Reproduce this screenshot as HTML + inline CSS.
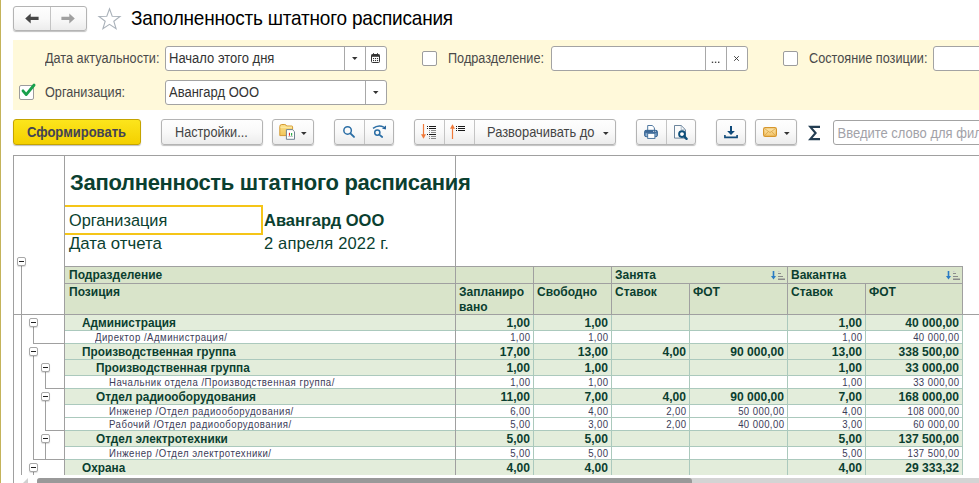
<!DOCTYPE html>
<html><head><meta charset="utf-8">
<style>
*{box-sizing:border-box}
html,body{margin:0;padding:0}
body{width:979px;height:483px;overflow:hidden;background:#fff;position:relative;font-family:"Liberation Sans",sans-serif;color:#333}
.a{position:absolute}
svg.a{overflow:visible}
.t{position:absolute;white-space:nowrap;line-height:1}
.btn{position:absolute;border:1px solid #b4b4b4;border-radius:3px;background:linear-gradient(#fefefe 0%,#f9f9f9 50%,#ececec 100%);box-shadow:0 1px 1px rgba(0,0,0,.25)}
.vd{position:absolute;top:0;bottom:0;width:1px;background:#c4c4c4}
.inp{position:absolute;border:1px solid #a3a3a3;border-radius:3px;background:#fff}
.inp .vd{background:#a8a8a8}
.cb{position:absolute;width:15px;height:15px;border:1px solid #9c9c9c;border-radius:2px;background:#fff}
.lbl{position:absolute;white-space:nowrap;line-height:1;font-size:12.7px;color:#4a4a4a;transform:scaleY(1.08);transform-origin:0 85%}
.sy{transform:scaleY(1.08);transform-origin:0 85%}
.hl{position:absolute;height:1px}
.vl{position:absolute;width:1px}
.tb{position:absolute;width:9px;height:9px;border:1px solid #a8a8a8;border-radius:2px;background:#fff;box-shadow:0 1px 1px rgba(0,0,0,.15)}
.tb::after{content:"";position:absolute;left:1px;top:3px;width:5px;height:1.3px;background:#222}
.rt{position:absolute;white-space:nowrap;line-height:1;color:#0b3f30}
</style></head><body>
<!-- left olive line -->
<div class="a" style="left:0;top:0;width:1px;height:483px;background:#c4b35a"></div>

<!-- nav buttons -->
<div class="btn" style="left:13px;top:6px;width:74px;height:25px">
  <div class="vd" style="left:36px"></div>
</div>
<svg class="a" style="left:25px;top:13px" width="14" height="11" viewBox="0 0 14 11"><path d="M0.2 5.4 L5.7 0.4 V3.7 H13.6 V7.1 H5.7 V10.4 Z" fill="#474747"/></svg>
<svg class="a" style="left:61px;top:13px" width="14" height="11" viewBox="0 0 14 11"><path d="M13.8 5.4 L8.3 0.4 V3.7 H0.4 V7.1 H8.3 V10.4 Z" fill="#a0a0a0"/></svg>
<!-- star -->
<svg class="a" style="left:97px;top:6.5px" width="25" height="24" viewBox="0 0 25 24"><path d="M12.5 1.8 L15.2 9.2 L23 9.4 L16.8 14.2 L19.1 21.8 L12.5 17.4 L5.9 21.8 L8.2 14.2 L2 9.4 L9.8 9.2 Z" fill="none" stroke="#aab2ba" stroke-width="1.1"/></svg>
<div class="t" style="left:131px;top:9px;font-size:19px;letter-spacing:-0.2px;color:#000;transform:scaleY(1.07);transform-origin:0 85%">Заполненность штатного расписания</div>

<!-- yellow panel -->
<div class="a" style="left:13px;top:40px;width:966px;height:70px;background:#fff9da"></div>
<div class="lbl" style="left:45px;top:53px">Дата актуальности:</div>
<div class="inp" style="left:165px;top:46px;width:222px;height:25px">
  <div class="t sy" style="left:3px;top:5px;font-size:13px;color:#333">Начало этого дня</div>
  <div class="vd" style="left:178px"></div>
  <div class="vd" style="left:199px"></div>
</div>
<svg class="a" style="left:352px;top:57px" width="6" height="4"><path d="M0 0 H5.5 L2.75 3 Z" fill="#333"/></svg>
<svg class="a" style="left:371px;top:53px" width="9" height="10" viewBox="0 0 9 10"><rect x="0.5" y="1.5" width="8" height="8" rx="1" fill="#fff" stroke="#333" stroke-width="1"/><rect x="0.5" y="1.5" width="8" height="2.3" fill="#333"/><rect x="2" y="0.2" width="1" height="1.6" fill="#333"/><rect x="6" y="0.2" width="1" height="1.6" fill="#333"/><g fill="#333"><rect x="2" y="5" width="1.1" height="1.1"/><rect x="4" y="5" width="1.1" height="1.1"/><rect x="6" y="5" width="1.1" height="1.1"/><rect x="2" y="7" width="1.1" height="1.1"/><rect x="4" y="7" width="1.1" height="1.1"/><rect x="6" y="7" width="1.1" height="1.1"/></g></svg>

<div class="lbl" style="left:45px;top:87px">Организация:</div>
<div class="inp" style="left:165px;top:80px;width:222px;height:25px">
  <div class="t sy" style="left:3px;top:5px;font-size:13px;color:#333">Авангард ООО</div>
  <div class="vd" style="left:199px"></div>
</div>
<svg class="a" style="left:373px;top:91px" width="6" height="4"><path d="M0 0 H5.5 L2.75 3 Z" fill="#333"/></svg>
<div class="cb" style="left:19px;top:85px"></div>
<svg class="a" style="left:21px;top:83px" width="15" height="14" viewBox="0 0 15 14"><path d="M2 7.8 L5.2 11.6 L13.1 2" fill="none" stroke="#19a04c" stroke-width="2.8" stroke-linecap="round" stroke-linejoin="round"/></svg>

<div class="cb" style="left:422px;top:51px"></div>
<div class="lbl" style="left:448px;top:53px">Подразделение:</div>
<div class="inp" style="left:551px;top:46px;width:197px;height:25px">
  <div class="vd" style="left:153px"></div>
  <div class="vd" style="left:174px"></div>
</div>
<svg class="a" style="left:711px;top:61px" width="9" height="3"><rect x="0.8" y="0.6" width="1.4" height="1.4" fill="#444"/><rect x="3.9" y="0.6" width="1.4" height="1.4" fill="#444"/><rect x="7" y="0.6" width="1.4" height="1.4" fill="#444"/></svg>
<svg class="a" style="left:733px;top:55px" width="7" height="7" viewBox="0 0 7 7"><path d="M1.2 1.2 L5.8 5.8 M5.8 1.2 L1.2 5.8" stroke="#3a3a3a" stroke-width="0.95"/></svg>
<div class="cb" style="left:783px;top:51px"></div>
<div class="lbl" style="left:809px;top:53px">Состояние позиции:</div>
<div class="inp" style="left:933px;top:46px;width:60px;height:25px"></div>

<!-- toolbar -->
<div class="btn" style="left:13px;top:119px;width:128px;height:26px;background:linear-gradient(#fce51c,#f4d000);border-color:#c5a400"></div>
<div class="t sy" style="left:27px;top:126.4px;font-size:13px;font-weight:bold;color:#434354">Сформировать</div>
<div class="btn" style="left:161px;top:119px;width:102px;height:26px"></div>
<div class="t sy" style="left:175px;top:127px;font-size:12.7px;color:#444">Настройки...</div>

<div class="btn" style="left:272px;top:119px;width:42px;height:26px"></div>
<svg class="a" style="left:278px;top:123px" width="20" height="18" viewBox="0 0 20 18">
  <defs><linearGradient id="fg" x1="0" y1="0" x2="0" y2="1"><stop offset="0" stop-color="#fbe08a"/><stop offset="1" stop-color="#f1c65a"/></linearGradient></defs>
  <path d="M1.8 3.6 Q1.8 1.5 3.6 1.5 H6.8 Q8 1.5 8.6 3 H13.8 Q14.6 3 14.6 3.8 V12.6 H1.8 Z" fill="url(#fg)" stroke="#d49a34" stroke-width="1"/>
  <path d="M2.3 4.2 H14" stroke="#fff2b8" stroke-width="0.8"/>
  <path d="M8.4 6.6 H14.4 L16.5 8.7 V16.3 H8.4 Z" fill="#fff" stroke="#6f8291" stroke-width="1"/>
  <rect x="10.9" y="9.8" width="1.1" height="2.9" fill="#e02a2a"/><rect x="13" y="10" width="1.2" height="2.7" fill="#2fae4a"/>
  <rect x="10.2" y="13" width="4.8" height="0.6" fill="#9aa3aa"/>
</svg>
<svg class="a" style="left:301px;top:132px" width="6" height="4"><path d="M0 0 H5.6 L2.8 3 Z" fill="#333"/></svg>

<div class="btn" style="left:334px;top:119px;width:60px;height:26px"><div class="vd" style="left:29px"></div></div>
<svg class="a" style="left:341px;top:124px" width="16" height="16" viewBox="0 0 16 16"><circle cx="6.6" cy="6.4" r="3.75" fill="none" stroke="#2b6ea5" stroke-width="1.5"/><path d="M9.4 9.3 L13 12.9" stroke="#2b6ea5" stroke-width="1.9" stroke-linecap="round"/></svg>
<svg class="a" style="left:371px;top:124px" width="18" height="16" viewBox="0 0 18 16"><path d="M2 4.3 Q7.5 0.2 12.8 3.2" fill="none" stroke="#2b6ea5" stroke-width="1.5"/><path d="M15 1.6 L14.9 5.4 L11 4.4 Z" fill="#1f5f98"/><circle cx="6.3" cy="8.6" r="2.6" fill="none" stroke="#2b6ea5" stroke-width="1.5"/><path d="M8.3 10.6 L11.2 13" stroke="#2b6ea5" stroke-width="1.7" stroke-linecap="round"/></svg>

<div class="btn" style="left:414px;top:119px;width:202px;height:26px"><div class="vd" style="left:29px"></div><div class="vd" style="left:59px"></div></div>
<svg class="a" style="left:420px;top:123px" width="18" height="17" viewBox="0 0 18 17">
  <path d="M3.5 1 V13" stroke="#f07a3a" stroke-width="1.2"/><path d="M1 11.2 H6 L3.5 15.8 Z" fill="#f07a3a"/>
  <g fill="#1a1a1a"><rect x="7" y="3" width="1" height="1"/><rect x="9" y="3" width="7" height="1"/><rect x="7" y="5" width="1" height="1"/><rect x="9" y="5" width="7" height="1"/><rect x="7" y="11" width="1" height="1"/><rect x="9" y="11" width="7" height="1"/></g>
  <g fill="#8a8a8a"><rect x="9" y="7" width="1" height="1"/><rect x="11" y="7" width="5" height="1"/><rect x="9" y="9" width="1" height="1"/><rect x="11" y="9" width="5" height="1"/><rect x="9" y="13" width="1" height="1"/><rect x="11" y="13" width="5" height="1"/><rect x="9" y="15" width="1" height="1"/><rect x="11" y="15" width="5" height="1"/></g>
</svg>
<svg class="a" style="left:449px;top:123px" width="18" height="17" viewBox="0 0 18 17">
  <path d="M3.5 16 V4" stroke="#f07a3a" stroke-width="1.2"/><path d="M1 5.8 H6 L3.5 1.2 Z" fill="#f07a3a"/>
  <g fill="#1a1a1a"><rect x="7" y="3" width="1" height="1"/><rect x="9" y="3" width="7" height="1"/><rect x="7" y="5" width="1" height="1"/><rect x="9" y="5" width="7" height="1"/><rect x="7" y="7" width="1" height="1"/><rect x="9" y="7" width="7" height="1"/></g>
</svg>
<div class="t sy" style="left:487px;top:127px;font-size:12.9px;color:#444">Разворачивать до</div>
<svg class="a" style="left:603px;top:132px" width="6" height="4"><path d="M0 0 H5.6 L2.8 3 Z" fill="#333"/></svg>

<div class="btn" style="left:636px;top:119px;width:60px;height:26px"><div class="vd" style="left:29px"></div></div>
<svg class="a" style="left:640px;top:120px" width="52" height="24" viewBox="0 0 52 24">
  <path d="M7.7 5.5 H12.2 L14.4 7.7 V11 H7.7 Z" fill="#fff" stroke="#3d6a96" stroke-width="0.9"/>
  <rect x="4.6" y="10.3" width="12.8" height="6.4" rx="1.4" fill="#4d7aa8" stroke="#2f5f8e" stroke-width="0.9"/>
  <rect x="5.6" y="13.2" width="10.8" height="3" fill="#92b2d2"/>
  <rect x="5.6" y="11.5" width="10.8" height="0.8" fill="#2f5580"/>
  <rect x="13" y="10.9" width="1" height="0.8" fill="#e8f0f8"/><rect x="14.8" y="10.9" width="1" height="0.8" fill="#e8f0f8"/>
  <rect x="7.7" y="13.3" width="7.2" height="5.1" fill="#fff" stroke="#3d6a96" stroke-width="0.9"/>
  <path d="M34.5 5.5 H41.2 L45.5 9.8 V18.1 H34.5 Z" fill="#fbfbfb" stroke="#5b7791" stroke-width="0.9"/>
  <path d="M41.2 5.5 V9.8 H45.5" fill="none" stroke="#8aa0b4" stroke-width="0.7"/>
  <circle cx="42" cy="14.1" r="2.9" fill="#fff" stroke="#0e4f7a" stroke-width="1.9"/>
  <path d="M44.2 16.4 L46.6 18.8" stroke="#0e4f7a" stroke-width="2.4" stroke-linecap="round"/>
</svg>

<div class="btn" style="left:716px;top:119px;width:30px;height:26px"></div>
<svg class="a" style="left:723px;top:125px" width="16" height="14" viewBox="0 0 16 14">
  <path d="M8 1 V7" stroke="#0f4a7a" stroke-width="2"/><path d="M4.1 6.1 H11.9 L8 10.1 Z" fill="#0f4a7a"/>
  <path d="M1.9 10 V12.4 H14.1 V10" fill="none" stroke="#0f4a7a" stroke-width="1.6"/>
</svg>
<div class="btn" style="left:755px;top:119px;width:42px;height:26px"></div>
<svg class="a" style="left:763px;top:127px" width="14" height="10" viewBox="0 0 14 10">
  <defs><linearGradient id="eg" x1="0" y1="0" x2="0" y2="1"><stop offset="0" stop-color="#fce6ac"/><stop offset="1" stop-color="#f2c266"/></linearGradient></defs>
  <rect x="0.6" y="0.6" width="12.8" height="8.8" rx="1.6" fill="url(#eg)" stroke="#d6962c" stroke-width="1.2"/>
  <path d="M1.5 1.5 L7 5.6 L12.5 1.5 M1.5 8.8 L5.3 4.6 M12.5 8.8 L8.7 4.6" fill="none" stroke="#d9a447" stroke-width="0.8"/>
</svg>
<svg class="a" style="left:784px;top:132px" width="6" height="4"><path d="M0 0 H5.6 L2.8 3 Z" fill="#333"/></svg>
<svg class="a" style="left:809px;top:126px" width="11" height="14" viewBox="0 0 11 14"><path d="M11 0.9 H1.3 L6.6 7 L1.3 13.1 H11" fill="none" stroke="#233d52" stroke-width="2.1" stroke-linejoin="miter" stroke-miterlimit="10"/></svg>
<div class="inp" style="left:833px;top:120px;width:160px;height:25px">
  <div class="t sy" style="left:3.5px;top:5.5px;font-size:13px;color:#a2a2a8">Введите слово для фильтра</div>
</div>

<!-- report area -->
<div class="hl" style="left:13px;top:155px;width:966px;background:#a0a0a0"></div>
<div class="vl" style="left:13px;top:155px;height:328px;background:#a0a0a0"></div>
<div class="vl" style="left:64px;top:155px;height:320px;background:#a0a0a0"></div>
<div class="vl" style="left:455px;top:155px;height:112px;background:#a0a0a0"></div>

<div class="rt" style="left:70px;top:171.8px;font-size:22px;letter-spacing:-0.3px;font-weight:bold">Заполненность штатного расписания</div>
<div class="a" style="left:65px;top:205px;width:198px;height:30px;border:2px solid #f5c518;border-left:none"></div>
<div class="rt" style="left:69px;top:212.3px;font-size:16.3px">Организация</div>
<div class="rt" style="left:264px;top:212.3px;font-size:16.5px;font-weight:bold">Авангард ООО</div>
<div class="rt" style="left:69px;top:236px;font-size:16.8px">Дата отчета</div>
<div class="rt" style="left:264px;top:235.2px;font-size:16.5px;letter-spacing:0.15px">2 апреля 2022 г.</div>
<div class="a" style="left:65px;top:267px;width:897px;height:47px;background:#d9e4ca"></div>
<div class="hl" style="left:64px;top:266px;width:899px;background:#a0a0a0"></div>
<div class="hl" style="left:64px;top:283px;width:899px;background:#a0a0a0"></div>
<div class="hl" style="left:13px;top:314px;width:966px;background:#a0a0a0"></div>
<div class="vl" style="left:455px;top:266px;height:48px;background:#a0a0a0"></div>
<div class="vl" style="left:533px;top:266px;height:48px;background:#a0a0a0"></div>
<div class="vl" style="left:611px;top:266px;height:48px;background:#a0a0a0"></div>
<div class="vl" style="left:787px;top:266px;height:48px;background:#a0a0a0"></div>
<div class="vl" style="left:962px;top:266px;height:48px;background:#a0a0a0"></div>
<div class="vl" style="left:689px;top:283px;height:31px;background:#a0a0a0"></div>
<div class="vl" style="left:865px;top:283px;height:31px;background:#a0a0a0"></div>
<div class="rt" style="left:69px;top:268.54px;font-size:12px;font-weight:bold;">Подразделение</div>
<div class="rt" style="left:69px;top:286.04px;font-size:12px;font-weight:bold;">Позиция</div>
<div class="rt" style="left:615px;top:268.54px;font-size:12px;font-weight:bold;">Занята</div>
<div class="rt" style="left:791px;top:268.54px;font-size:12px;font-weight:bold;">Вакантна</div>
<div class="rt" style="left:459px;top:286.24px;font-size:12px;font-weight:bold;">Запланиро</div>
<div class="rt" style="left:459px;top:300.64px;font-size:12px;font-weight:bold;">вано</div>
<div class="rt" style="left:537px;top:286.24px;font-size:12px;font-weight:bold;">Свободно</div>
<div class="rt" style="left:615px;top:286.24px;font-size:12px;font-weight:bold;">Ставок</div>
<div class="rt" style="left:693px;top:286.24px;font-size:12px;font-weight:bold;">ФОТ</div>
<div class="rt" style="left:791px;top:286.24px;font-size:12px;font-weight:bold;">Ставок</div>
<div class="rt" style="left:869px;top:286.24px;font-size:12px;font-weight:bold;">ФОТ</div>
<svg class="a" style="left:771px;top:270px" width="15" height="11" viewBox="0 0 15 11"><path d="M2.5 1 V7" stroke="#2a7bc4" stroke-width="1.6"/><path d="M0 6 L5 6 L2.5 9.5 Z" fill="#2a7bc4"/><rect x="7" y="1" width="1.5" height="1" fill="#c8c8c8"/><rect x="7" y="3" width="3" height="1" fill="#8a8a8a"/><rect x="7" y="6" width="5" height="1" fill="#8a8a8a"/><rect x="7" y="8.5" width="7" height="1.5" fill="#8a8a8a"/></svg>
<svg class="a" style="left:946px;top:270px" width="15" height="11" viewBox="0 0 15 11"><path d="M2.5 1 V7" stroke="#2a7bc4" stroke-width="1.6"/><path d="M0 6 L5 6 L2.5 9.5 Z" fill="#2a7bc4"/><rect x="7" y="1" width="1.5" height="1" fill="#c8c8c8"/><rect x="7" y="3" width="3" height="1" fill="#8a8a8a"/><rect x="7" y="6" width="5" height="1" fill="#8a8a8a"/><rect x="7" y="8.5" width="7" height="1.5" fill="#8a8a8a"/></svg>
<div class="a" style="left:65px;top:315px;width:897px;height:15px;background:#e3eddb"></div>
<div class="rt" style="left:82px;top:316.71px;font-size:11.8px;font-weight:bold;transform:scaleY(1.11);transform-origin:0 13%;">Администрация</div>
<div class="rt" style="right:449px;top:316.86px;font-size:12.1px;font-weight:bold;">1,00</div>
<div class="rt" style="right:371px;top:316.86px;font-size:12.1px;font-weight:bold;">1,00</div>
<div class="rt" style="right:117px;top:316.86px;font-size:12.1px;font-weight:bold;">1,00</div>
<div class="rt" style="right:20px;top:316.86px;font-size:12.1px;font-weight:bold;">40 000,00</div>
<div class="hl" style="left:65px;top:330px;width:897px;background:#abc9bd"></div>
<div class="rt" style="left:95px;top:333.27px;font-size:9.6px;color:#3c3c58;letter-spacing:0.5px;transform:scaleY(1.1);transform-origin:0 85%;">Директор /Администрация/</div>
<div class="rt" style="right:448.6px;top:333.27px;font-size:9.6px;color:#3c3c58;letter-spacing:0.4px;transform:scaleY(1.1);transform-origin:0 85%;">1,00</div>
<div class="rt" style="right:370.6px;top:333.27px;font-size:9.6px;color:#3c3c58;letter-spacing:0.4px;transform:scaleY(1.1);transform-origin:0 85%;">1,00</div>
<div class="rt" style="right:116.60000000000002px;top:333.27px;font-size:9.6px;color:#3c3c58;letter-spacing:0.4px;transform:scaleY(1.1);transform-origin:0 85%;">1,00</div>
<div class="rt" style="right:19.600000000000023px;top:333.27px;font-size:9.6px;color:#3c3c58;letter-spacing:0.4px;transform:scaleY(1.1);transform-origin:0 85%;">40 000,00</div>
<div class="a" style="left:65px;top:344px;width:897px;height:15px;background:#e3eddb"></div>
<div class="hl" style="left:65px;top:343px;width:897px;background:#abc9bd"></div>
<div class="rt" style="left:82px;top:345.71px;font-size:11.8px;font-weight:bold;transform:scaleY(1.11);transform-origin:0 13%;">Производственная группа</div>
<div class="rt" style="right:449px;top:345.86px;font-size:12.1px;font-weight:bold;">17,00</div>
<div class="rt" style="right:371px;top:345.86px;font-size:12.1px;font-weight:bold;">13,00</div>
<div class="rt" style="right:293px;top:345.86px;font-size:12.1px;font-weight:bold;">4,00</div>
<div class="rt" style="right:195px;top:345.86px;font-size:12.1px;font-weight:bold;">90 000,00</div>
<div class="rt" style="right:117px;top:345.86px;font-size:12.1px;font-weight:bold;">13,00</div>
<div class="rt" style="right:20px;top:345.86px;font-size:12.1px;font-weight:bold;">338 500,00</div>
<div class="a" style="left:65px;top:360px;width:897px;height:15px;background:#e3eddb"></div>
<div class="hl" style="left:65px;top:359px;width:897px;background:#abc9bd"></div>
<div class="rt" style="left:96px;top:361.71px;font-size:11.8px;font-weight:bold;transform:scaleY(1.11);transform-origin:0 13%;">Производственная группа</div>
<div class="rt" style="right:449px;top:361.86px;font-size:12.1px;font-weight:bold;">1,00</div>
<div class="rt" style="right:371px;top:361.86px;font-size:12.1px;font-weight:bold;">1,00</div>
<div class="rt" style="right:117px;top:361.86px;font-size:12.1px;font-weight:bold;">1,00</div>
<div class="rt" style="right:20px;top:361.86px;font-size:12.1px;font-weight:bold;">33 000,00</div>
<div class="hl" style="left:65px;top:375px;width:897px;background:#abc9bd"></div>
<div class="rt" style="left:109px;top:378.27px;font-size:9.6px;color:#3c3c58;letter-spacing:0.5px;transform:scaleY(1.1);transform-origin:0 85%;">Начальник отдела /Производственная группа/</div>
<div class="rt" style="right:448.6px;top:378.27px;font-size:9.6px;color:#3c3c58;letter-spacing:0.4px;transform:scaleY(1.1);transform-origin:0 85%;">1,00</div>
<div class="rt" style="right:370.6px;top:378.27px;font-size:9.6px;color:#3c3c58;letter-spacing:0.4px;transform:scaleY(1.1);transform-origin:0 85%;">1,00</div>
<div class="rt" style="right:116.60000000000002px;top:378.27px;font-size:9.6px;color:#3c3c58;letter-spacing:0.4px;transform:scaleY(1.1);transform-origin:0 85%;">1,00</div>
<div class="rt" style="right:19.600000000000023px;top:378.27px;font-size:9.6px;color:#3c3c58;letter-spacing:0.4px;transform:scaleY(1.1);transform-origin:0 85%;">33 000,00</div>
<div class="a" style="left:65px;top:389px;width:897px;height:15px;background:#e3eddb"></div>
<div class="hl" style="left:65px;top:388px;width:897px;background:#abc9bd"></div>
<div class="rt" style="left:96px;top:390.71px;font-size:11.8px;font-weight:bold;transform:scaleY(1.11);transform-origin:0 13%;">Отдел радиооборудования</div>
<div class="rt" style="right:449px;top:390.86px;font-size:12.1px;font-weight:bold;">11,00</div>
<div class="rt" style="right:371px;top:390.86px;font-size:12.1px;font-weight:bold;">7,00</div>
<div class="rt" style="right:293px;top:390.86px;font-size:12.1px;font-weight:bold;">4,00</div>
<div class="rt" style="right:195px;top:390.86px;font-size:12.1px;font-weight:bold;">90 000,00</div>
<div class="rt" style="right:117px;top:390.86px;font-size:12.1px;font-weight:bold;">7,00</div>
<div class="rt" style="right:20px;top:390.86px;font-size:12.1px;font-weight:bold;">168 000,00</div>
<div class="hl" style="left:65px;top:404px;width:897px;background:#abc9bd"></div>
<div class="rt" style="left:109px;top:407.27px;font-size:9.6px;color:#3c3c58;letter-spacing:0.5px;transform:scaleY(1.1);transform-origin:0 85%;">Инженер /Отдел радиооборудования/</div>
<div class="rt" style="right:448.6px;top:407.27px;font-size:9.6px;color:#3c3c58;letter-spacing:0.4px;transform:scaleY(1.1);transform-origin:0 85%;">6,00</div>
<div class="rt" style="right:370.6px;top:407.27px;font-size:9.6px;color:#3c3c58;letter-spacing:0.4px;transform:scaleY(1.1);transform-origin:0 85%;">4,00</div>
<div class="rt" style="right:292.6px;top:407.27px;font-size:9.6px;color:#3c3c58;letter-spacing:0.4px;transform:scaleY(1.1);transform-origin:0 85%;">2,00</div>
<div class="rt" style="right:194.60000000000002px;top:407.27px;font-size:9.6px;color:#3c3c58;letter-spacing:0.4px;transform:scaleY(1.1);transform-origin:0 85%;">50 000,00</div>
<div class="rt" style="right:116.60000000000002px;top:407.27px;font-size:9.6px;color:#3c3c58;letter-spacing:0.4px;transform:scaleY(1.1);transform-origin:0 85%;">4,00</div>
<div class="rt" style="right:19.600000000000023px;top:407.27px;font-size:9.6px;color:#3c3c58;letter-spacing:0.4px;transform:scaleY(1.1);transform-origin:0 85%;">108 000,00</div>
<div class="hl" style="left:65px;top:417px;width:897px;background:#abc9bd"></div>
<div class="rt" style="left:109px;top:420.27px;font-size:9.6px;color:#3c3c58;letter-spacing:0.5px;transform:scaleY(1.1);transform-origin:0 85%;">Рабочий /Отдел радиооборудования/</div>
<div class="rt" style="right:448.6px;top:420.27px;font-size:9.6px;color:#3c3c58;letter-spacing:0.4px;transform:scaleY(1.1);transform-origin:0 85%;">5,00</div>
<div class="rt" style="right:370.6px;top:420.27px;font-size:9.6px;color:#3c3c58;letter-spacing:0.4px;transform:scaleY(1.1);transform-origin:0 85%;">3,00</div>
<div class="rt" style="right:292.6px;top:420.27px;font-size:9.6px;color:#3c3c58;letter-spacing:0.4px;transform:scaleY(1.1);transform-origin:0 85%;">2,00</div>
<div class="rt" style="right:194.60000000000002px;top:420.27px;font-size:9.6px;color:#3c3c58;letter-spacing:0.4px;transform:scaleY(1.1);transform-origin:0 85%;">40 000,00</div>
<div class="rt" style="right:116.60000000000002px;top:420.27px;font-size:9.6px;color:#3c3c58;letter-spacing:0.4px;transform:scaleY(1.1);transform-origin:0 85%;">3,00</div>
<div class="rt" style="right:19.600000000000023px;top:420.27px;font-size:9.6px;color:#3c3c58;letter-spacing:0.4px;transform:scaleY(1.1);transform-origin:0 85%;">60 000,00</div>
<div class="a" style="left:65px;top:431px;width:897px;height:15px;background:#e3eddb"></div>
<div class="hl" style="left:65px;top:430px;width:897px;background:#abc9bd"></div>
<div class="rt" style="left:96px;top:432.71px;font-size:11.8px;font-weight:bold;transform:scaleY(1.11);transform-origin:0 13%;">Отдел электротехники</div>
<div class="rt" style="right:449px;top:432.86px;font-size:12.1px;font-weight:bold;">5,00</div>
<div class="rt" style="right:371px;top:432.86px;font-size:12.1px;font-weight:bold;">5,00</div>
<div class="rt" style="right:117px;top:432.86px;font-size:12.1px;font-weight:bold;">5,00</div>
<div class="rt" style="right:20px;top:432.86px;font-size:12.1px;font-weight:bold;">137 500,00</div>
<div class="hl" style="left:65px;top:446px;width:897px;background:#abc9bd"></div>
<div class="rt" style="left:109px;top:449.27px;font-size:9.6px;color:#3c3c58;letter-spacing:0.5px;transform:scaleY(1.1);transform-origin:0 85%;">Инженер /Отдел электротехники/</div>
<div class="rt" style="right:448.6px;top:449.27px;font-size:9.6px;color:#3c3c58;letter-spacing:0.4px;transform:scaleY(1.1);transform-origin:0 85%;">5,00</div>
<div class="rt" style="right:370.6px;top:449.27px;font-size:9.6px;color:#3c3c58;letter-spacing:0.4px;transform:scaleY(1.1);transform-origin:0 85%;">5,00</div>
<div class="rt" style="right:116.60000000000002px;top:449.27px;font-size:9.6px;color:#3c3c58;letter-spacing:0.4px;transform:scaleY(1.1);transform-origin:0 85%;">5,00</div>
<div class="rt" style="right:19.600000000000023px;top:449.27px;font-size:9.6px;color:#3c3c58;letter-spacing:0.4px;transform:scaleY(1.1);transform-origin:0 85%;">137 500,00</div>
<div class="a" style="left:65px;top:460px;width:897px;height:15px;background:#e3eddb"></div>
<div class="hl" style="left:65px;top:459px;width:897px;background:#abc9bd"></div>
<div class="rt" style="left:82px;top:461.71px;font-size:11.8px;font-weight:bold;transform:scaleY(1.11);transform-origin:0 13%;">Охрана</div>
<div class="rt" style="right:449px;top:461.86px;font-size:12.1px;font-weight:bold;">4,00</div>
<div class="rt" style="right:371px;top:461.86px;font-size:12.1px;font-weight:bold;">4,00</div>
<div class="rt" style="right:117px;top:461.86px;font-size:12.1px;font-weight:bold;">4,00</div>
<div class="rt" style="right:20px;top:461.86px;font-size:12.1px;font-weight:bold;">29 333,32</div>
<div class="vl" style="left:533px;top:315px;height:160px;background:#abc9bd"></div>
<div class="vl" style="left:611px;top:315px;height:160px;background:#abc9bd"></div>
<div class="vl" style="left:689px;top:315px;height:160px;background:#abc9bd"></div>
<div class="vl" style="left:787px;top:315px;height:160px;background:#abc9bd"></div>
<div class="vl" style="left:865px;top:315px;height:160px;background:#abc9bd"></div>
<div class="vl" style="left:962px;top:315px;height:160px;background:#abc9bd"></div>
<div class="vl" style="left:455px;top:315px;height:160px;background:#a0a0a0"></div>
<div class="vl" style="left:21px;top:265px;height:211px;background:#a0a0a0"></div>
<div class="tb" style="left:17px;top:257px"></div>
<div class="vl" style="left:33px;top:327px;height:16px;background:#a0a0a0"></div>
<div class="hl" style="left:33px;top:343px;width:31px;background:#a0a0a0"></div>
<div class="vl" style="left:33px;top:356px;height:103px;background:#a0a0a0"></div>
<div class="hl" style="left:33px;top:459px;width:31px;background:#a0a0a0"></div>
<div class="vl" style="left:45px;top:372px;height:16px;background:#a0a0a0"></div>
<div class="hl" style="left:45px;top:388px;width:19px;background:#a0a0a0"></div>
<div class="vl" style="left:45px;top:401px;height:29px;background:#a0a0a0"></div>
<div class="hl" style="left:45px;top:430px;width:19px;background:#a0a0a0"></div>
<div class="vl" style="left:45px;top:443px;height:16px;background:#a0a0a0"></div>
<div class="vl" style="left:33px;top:472px;height:4px;background:#a0a0a0"></div>
<div class="tb" style="left:29px;top:318px"></div>
<div class="tb" style="left:29px;top:347px"></div>
<div class="tb" style="left:41px;top:363px"></div>
<div class="tb" style="left:41px;top:392px"></div>
<div class="tb" style="left:41px;top:434px"></div>
<div class="tb" style="left:29px;top:463px"></div>
<div class="a" style="left:14px;top:475px;width:965px;height:3px;background:#fff"></div>
<div class="a" style="left:14px;top:478px;width:965px;height:5px;background:#fff"></div>
<div class="a" style="left:37px;top:478px;width:942px;height:8px;background:#d4d4d4;border-radius:3px 0 0 0"></div>
<div class="a" style="left:37px;top:478px;width:655px;height:8px;background:#999999;border-radius:3px 3px 0 0"></div>
<svg class="a" style="left:21px;top:478px" width="8" height="5"><path d="M7 0 L2 5 L7 5 Z" fill="#d0d0d0"/></svg>

</body></html>
